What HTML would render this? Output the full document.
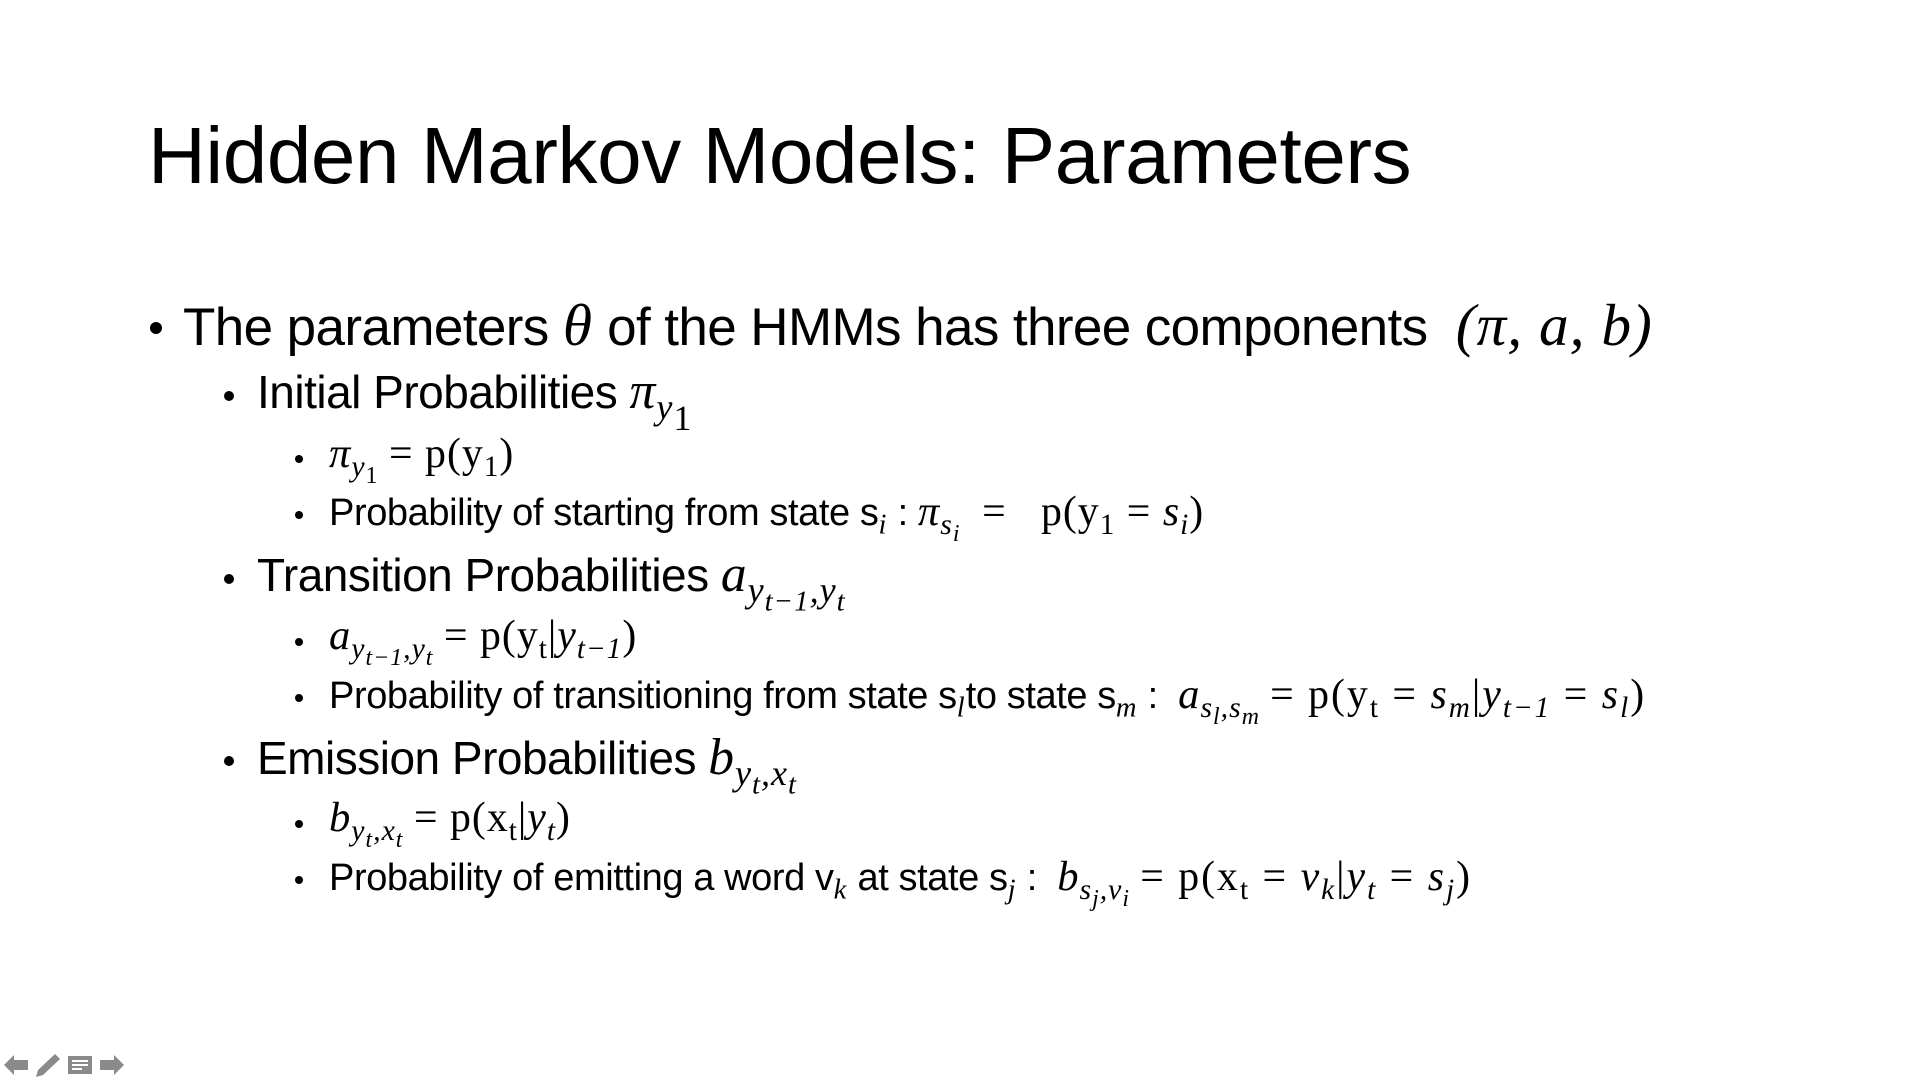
<!DOCTYPE html>
<html><head><meta charset="utf-8"><style>
body{margin:0;width:1920px;height:1080px;background:#fff;overflow:hidden;font-family:"Liberation Sans",sans-serif;color:#000}
.l{position:absolute;white-space:nowrap;line-height:1}
.m{font-family:"Liberation Serif",serif;font-style:italic;font-size:1.12em;letter-spacing:1px}
.r{font-family:"Liberation Serif",serif;font-size:1.1em;letter-spacing:1px}
.m .r,.r .m{font-size:1em}
sub{font-size:0.7em;vertical-align:-0.3em;line-height:0}
sub sub{font-size:0.8em}
sub.m{font-size:0.75em}
.d{position:absolute;border-radius:50%;background:#000}
</style></head><body>
<div class="l" style="left:148px;top:116px;font-size:80px;font-weight:300;letter-spacing:-0.4px">Hidden Markov Models: Parameters</div>

<div class="d" style="left:150px;top:322px;width:12px;height:12px"></div>
<div class="l" style="left:183px;top:296px;font-size:53px;letter-spacing:-0.6px">The parameters <span class="m">θ</span> of the HMMs has three components &nbsp;<span class="m" style="letter-spacing:1px"><span class="r">(</span>π, a, b<span class="r">)</span></span></div>

<div class="d" style="left:224px;top:391px;width:10px;height:10px"></div>
<div class="l" style="left:257px;top:366px;font-size:46px;letter-spacing:-0.5px">Initial Probabilities <span class="m">π<sub>y<sub class="r" style="font-style:normal">1</sub></sub></span></div>

<div class="d" style="left:295px;top:455px;width:8px;height:8px"></div>
<div class="l" style="left:329px;top:433px;font-size:38px"><span class="m">π<sub>y<sub style="font-style:normal">1</sub></sub></span> <span class="r">= p(y<sub>1</sub>)</span></div>

<div class="d" style="left:295px;top:511px;width:8px;height:8px"></div>
<div class="l" style="left:329px;top:491px;font-size:38px;letter-spacing:-0.4px">Probability of starting from state s<sub class="m">i</sub> : <span class="m">π<sub>s<sub>i</sub></sub></span> <span class="r">&nbsp;= &nbsp;&nbsp;p(y<sub>1</sub> = <i>s<sub>i</sub></i>)</span></div>

<div class="d" style="left:224px;top:574px;width:10px;height:10px"></div>
<div class="l" style="left:257px;top:549px;font-size:46px;letter-spacing:-0.5px">Transition Probabilities <span class="m">a<sub>y<sub>t−1</sub>,y<sub>t</sub></sub></span></div>

<div class="d" style="left:295px;top:638px;width:8px;height:8px"></div>
<div class="l" style="left:329px;top:615px;font-size:38px"><span class="m">a<sub>y<sub>t−1</sub>,y<sub>t</sub></sub></span> <span class="r">= p(y<sub>t</sub>|<i>y<sub>t−1</sub></i>)</span></div>

<div class="d" style="left:295px;top:694px;width:8px;height:8px"></div>
<div class="l" style="left:329px;top:674px;font-size:38px;letter-spacing:-0.4px">Probability of transitioning from state s<sub class="m">l</sub>to state s<sub class="m">m</sub> : &nbsp;<span class="m">a<sub>s<sub>l</sub>,s<sub>m</sub></sub></span> <span class="r" style="letter-spacing:2px">= p(y<sub>t</sub> = <i>s<sub>m</sub></i>|<i>y<sub>t−1</sub></i> = <i>s<sub>l</sub></i>)</span></div>

<div class="d" style="left:224px;top:756px;width:10px;height:10px"></div>
<div class="l" style="left:257px;top:732px;font-size:46px;letter-spacing:-0.5px">Emission Probabilities <span class="m">b<sub>y<sub>t</sub>,x<sub>t</sub></sub></span></div>

<div class="d" style="left:295px;top:820px;width:8px;height:8px"></div>
<div class="l" style="left:329px;top:797px;font-size:38px"><span class="m">b<sub>y<sub>t</sub>,x<sub>t</sub></sub></span> <span class="r">= p(x<sub>t</sub>|<i>y<sub>t</sub></i>)</span></div>

<div class="d" style="left:295px;top:876px;width:8px;height:8px"></div>
<div class="l" style="left:329px;top:856px;font-size:38px;letter-spacing:-0.4px">Probability of emitting a word v<sub class="m">k</sub> at state s<sub class="m">j</sub> : &nbsp;<span class="m">b<sub>s<sub>j</sub>,v<sub>i</sub></sub></span> <span class="r" style="letter-spacing:2px">= p(x<sub>t</sub> = <i>v<sub>k</sub></i>|<i>y<sub>t</sub></i> = <i>s<sub>j</sub></i>)</span></div>

<svg style="position:absolute;left:0;top:1050px" width="130" height="30" viewBox="0 0 130 30">
<g fill="#8a8a8a">
<path d="M4 15 L14 5 L14 10 L28 10 L28 20 L14 20 L14 25 Z"/>
<path d="M36 27 L38 20 L55 4 L60 9 L43 25 Z"/>
<rect x="68" y="6" width="24" height="18"/>
<path d="M100 10 L114 10 L114 5 L124 15 L114 25 L114 20 L100 20 Z"/>
</g>
<g stroke="#fff" stroke-width="2"><line x1="72" y1="11" x2="88" y2="11"/><line x1="72" y1="15" x2="88" y2="15"/><line x1="72" y1="19" x2="82" y2="19"/></g>
</svg>
</body></html>
